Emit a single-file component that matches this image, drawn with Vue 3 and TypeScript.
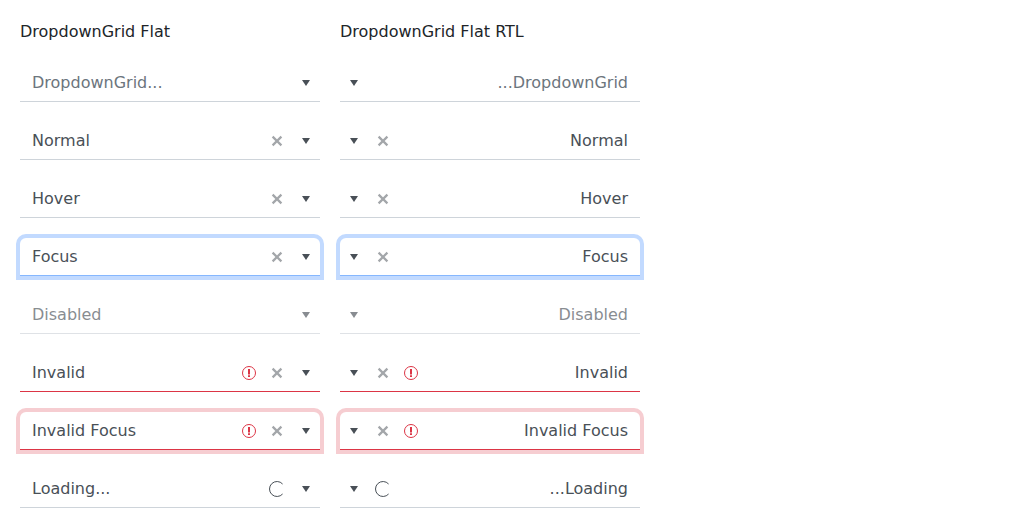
<script setup lang="ts">
interface Row { text: string; state?: string; clear?: boolean; invalid?: boolean; loading?: boolean }
const rows: Row[] = [
  { text: 'DropdownGrid...', state: 'placeholder' },
  { text: 'Normal', clear: true },
  { text: 'Hover', clear: true },
  { text: 'Focus', state: 'focus', clear: true },
  { text: 'Disabled', state: 'disabled' },
  { text: 'Invalid', state: 'invalid', clear: true, invalid: true },
  { text: 'Invalid Focus', state: 'invalid invalid-focus', clear: true, invalid: true },
  { text: 'Loading...', loading: true },
]
const columns = [
  { title: 'DropdownGrid Flat', dir: 'ltr' },
  { title: 'DropdownGrid Flat RTL', dir: 'rtl' },
]
</script>

<template>
  <main class="page">
    <section v-for="col in columns" :key="col.dir" class="column">
      <h2 class="title">{{ col.title }}</h2>
      <div v-for="row in rows" :key="row.text" class="picker" :class="row.state" :dir="col.dir">
        <span class="value">{{ row.text }}</span>
        <svg v-if="row.invalid" class="icon error" viewBox="0 0 16 16">
          <circle cx="8" cy="8" r="6.5" fill="none" stroke="currentColor" />
          <path d="M7 4h2v5.5H7zM7 10.3h2v1.7H7z" fill="currentColor" />
        </svg>
        <svg v-if="row.clear" class="icon clear" viewBox="0 0 16 16">
          <path d="M3.6 3.6l8.8 8.8M12.4 3.6l-8.8 8.8" fill="none" stroke="currentColor" stroke-width="2.2" />
        </svg>
        <svg v-if="row.loading" class="icon loading" viewBox="0 0 16 16">
          <path d="M13.6 3A7.5 7.5 0 1 0 13.6 13" fill="none" stroke="currentColor" />
        </svg>
        <span class="button">
          <svg class="icon" viewBox="0 0 16 16"><path d="M4 5h8l-4 6z" fill="currentColor" /></svg>
        </span>
      </div>
    </section>
  </main>
</template>

<style>
body { background: #fff; }
</style>
<style scoped>
.page { display: flex; gap: 20px; padding: 20px; font: 16px/24px "DejaVu Sans", sans-serif; color: #212529; }
.column { width: 300px; display: flex; flex-direction: column; gap: 20px; }
.title { margin: 0; font-size: 16px; font-weight: 400; line-height: 24px; white-space: nowrap; }
.picker { box-sizing: border-box; height: 38px; display: flex; align-items: center; border-bottom: 1px solid #ced4da; color: #495057; }
.value { flex: 1; padding: 0 12px; }
.icon { width: 16px; height: 16px; display: block; flex: none; }
.button { width: 28px; display: flex; justify-content: center; }
.clear, .loading { margin-inline: 6px 7px; }
.clear { opacity: .5; }
.error { margin: 0 6px; color: #dc3545; }
.placeholder .value { color: #6c757d; }
.focus { border-radius: 6px 6px 0 0; border-color: #86b7fe; box-shadow: 0 0 0 4px #c2daff; }
.disabled { opacity: .65; }
.invalid { border-color: #dc3545; }
.invalid-focus { border-radius: 6px 6px 0 0; box-shadow: 0 0 0 4px #f6cdd1; }
</style>
